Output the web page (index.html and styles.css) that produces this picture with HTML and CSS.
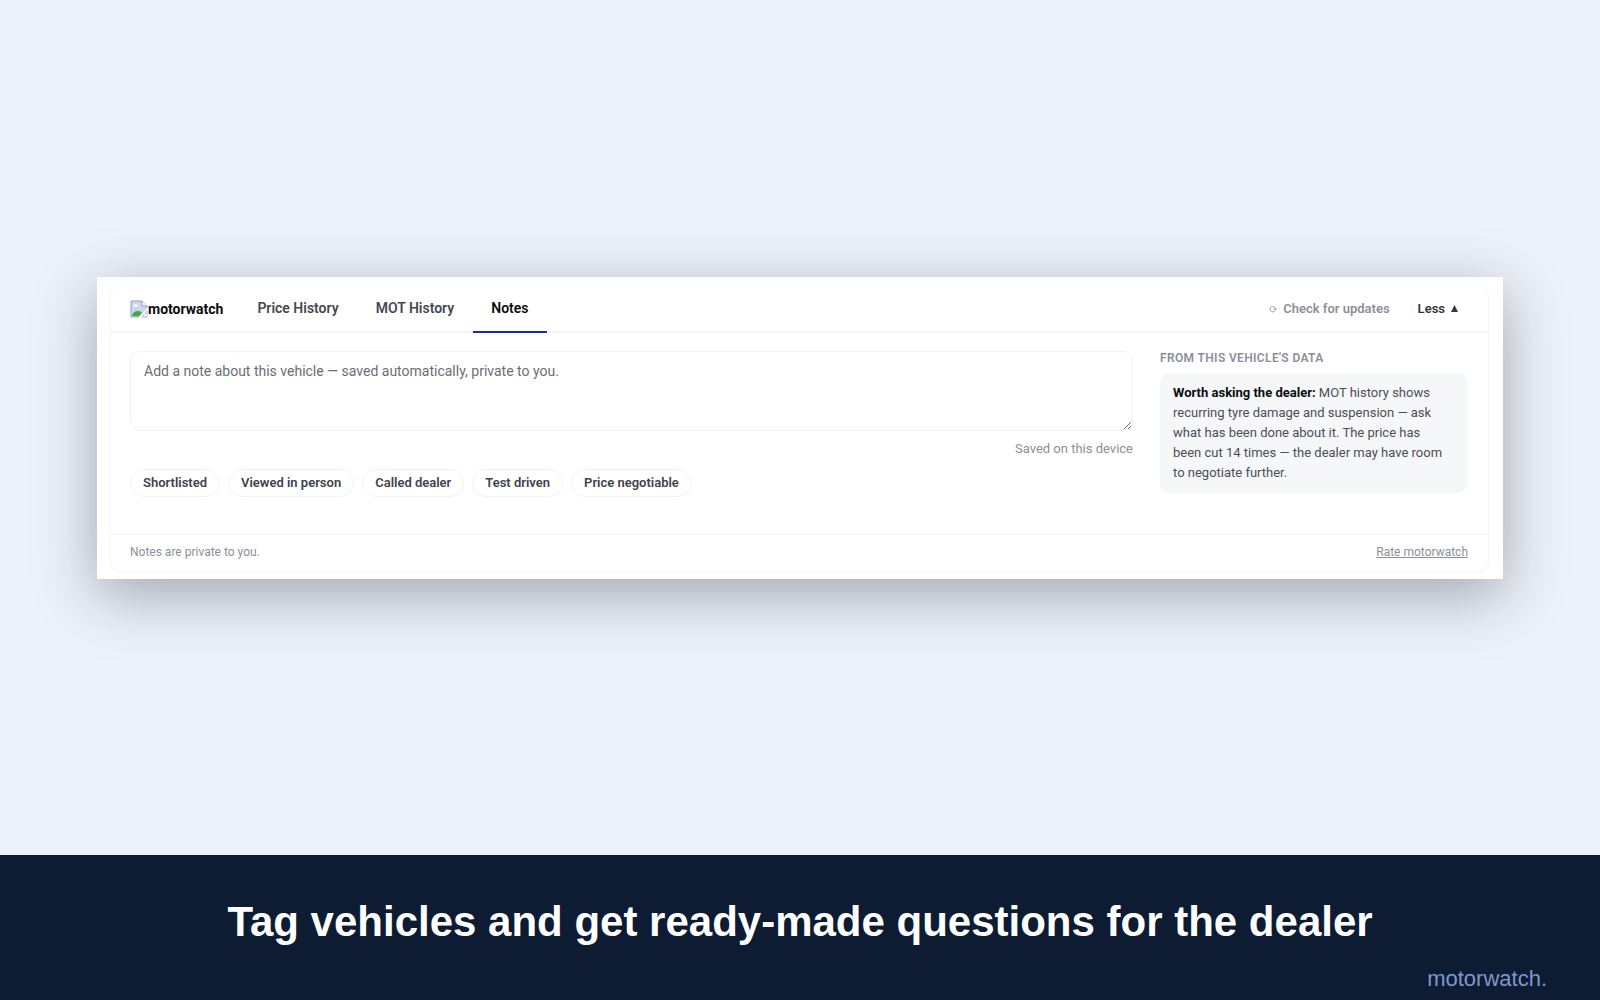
FILE: index.html
```html
<!DOCTYPE html>
<html lang="en">
<head>
    <meta charset="UTF-8">
    <meta name="viewport" content="width=device-width, initial-scale=1.0">
    <title>motorwatch</title>
    <link rel="stylesheet" href="styles.css">
</head>
<body>

<main class="stage">
    <div class="frame">
        <section class="widget">
            <header class="topbar">
                <div class="brand">
                    <svg class="brand-icon" viewBox="0 0 18 18" aria-hidden="true">
                        <path d="M1 1h11l5 5v3l-8 8H1z" fill="#c6d8f5"/>
                        <path d="M3 6.500q0-1.500 1.500-1.500q1-2 2.500 0q1.500 0 1.500 1.500z" fill="#fff"/>
                        <path d="M2 16q1-5 6-5q3 0 4 2l-3 3z" fill="#45a83c"/>
                        <path d="M1 17V1h11l5 5v2M1 17h8" fill="none" stroke="#9a9fa8"/>
                        <path d="M12 1v5h5" fill="#fff" stroke="#9a9fa8"/>
                        <path d="M17 11v6h-5z" fill="#fff" stroke="#b4b8be"/>
                    </svg>
                    <span>motorwatch</span>
                </div>
                <nav class="tabs">
                    <button type="button" class="tab">Price History</button>
                    <button type="button" class="tab">MOT History</button>
                    <button type="button" class="tab active">Notes</button>
                </nav>
                <div class="actions">
                    <button type="button" class="update">
                        <svg class="refresh" viewBox="0 0 9 9" aria-hidden="true">
                            <path d="M6.500 6.600A3 3 0 1 1 7 3.800" fill="none" stroke="#8b8f9b"/>
                            <path d="M5 3.800h4L7 6.200z" fill="#8b8f9b"/>
                        </svg>
                        Check for updates
                    </button>
                    <button type="button" class="toggle">
                        Less
                        <svg class="caret" viewBox="0 0 8 8" aria-hidden="true"><path d="M4 0l4 8H0z" fill="#33363f"/></svg>
                    </button>
                </div>
            </header>

            <div class="content">
                <div class="notes">
                    <textarea class="note" aria-label="Note" placeholder="Add a note about this vehicle — saved automatically, private to you."></textarea>
                    <p class="status">Saved on this device</p>
                    <div class="tags">
                        <button type="button" class="tag">Shortlisted</button>
                        <button type="button" class="tag">Viewed in person</button>
                        <button type="button" class="tag">Called dealer</button>
                        <button type="button" class="tag">Test driven</button>
                        <button type="button" class="tag">Price negotiable</button>
                    </div>
                </div>
                <aside class="insights">
                    <h2>From this vehicle's data</h2>
                    <p class="insight"><strong>Worth asking the dealer:</strong> MOT history shows recurring tyre damage and suspension — ask what has been done about it. The price has been cut 14 times — the dealer may have room to negotiate further.</p>
                </aside>
            </div>

            <footer class="bottombar">
                <span>Notes are private to you.</span>
                <a href="#">Rate motorwatch</a>
            </footer>
        </section>
    </div>
</main>

<div class="banner">
    <h1>Tag vehicles and get ready-made questions for the dealer</h1>
    <p>motorwatch.</p>
</div>

</body>
</html>
```
FILE: styles.css
```css
* {
    box-sizing: border-box;
}
body {
    margin: 0;
    min-height: 100vh;
    display: flex;
    flex-direction: column;
    background: #edf1fa;
    font-family: Roboto, "Liberation Sans", sans-serif;
}
h1, h2, p {
    margin: 0;
}
button {
    border: none;
    background: none;
    padding: 0;
    font-family: inherit;
    font-weight: 600;
    cursor: pointer;
}
.stage {
    flex: 1;
    display: flex;
    align-items: center;
    padding: 0 97px;
}
.frame {
    flex: 1;
    padding: 7px 14px 7px 13px;
    background: #fff;
    box-shadow: 0 16px 56px rgba(15, 23, 32, 0.34);
}
.widget {
    border: 1px solid #f6f7f8;
    border-top-color: #fff;
    border-radius: 12px;
    background: #fff;
    box-shadow: 0 1px 2px rgba(0, 0, 0, 0.03);
}
.topbar {
    display: flex;
    height: 48px;
    padding: 0 30px 0 19px;
    border-bottom: 2px solid #f5f6f7;
}
.brand {
    display: flex;
    align-items: center;
    margin-right: 16px;
    padding-top: 2px;
    font-size: 14px;
    font-weight: 700;
    color: #0b0c10;
}
.brand-icon {
    width: 18px;
    height: 18px;
}
.tabs {
    display: flex;
    gap: 1px;
    margin-bottom: -2px;
}
.tab {
    padding: 0 18px;
    border-bottom: 2px solid transparent;
    font-size: 14px;
    color: #454853;
}
.tab.active {
    color: #0b0c10;
    border-bottom-color: #1427c8;
}
.actions {
    display: flex;
    align-items: center;
    gap: 28px;
    margin-left: auto;
    padding-top: 2px;
}
.update, .toggle {
    display: flex;
    align-items: center;
    font-size: 13px;
}
.update {
    gap: 6px;
    color: #8b8f9b;
}
.toggle {
    gap: 6px;
    color: #33363f;
}
.refresh {
    width: 8px;
    height: 8px;
}
.caret {
    width: 7px;
    height: 7px;
}
.content {
    display: flex;
    gap: 27px;
    padding: 18px 20px 37px 19px;
}
.notes {
    flex: 1;
}
.note {
    display: block;
    width: 100%;
    height: 80px;
    padding: 9px 13px;
    border: 1px solid #f1f2f4;
    border-radius: 10px;
    font-family: inherit;
    font-size: 14px;
    line-height: 20px;
    resize: vertical;
}
.note::placeholder {
    color: #6b6e74;
}
.status {
    margin: 8px 0 10px;
    font-size: 13px;
    line-height: 20px;
    text-align: right;
    color: #8b8f9b;
}
.tags {
    display: flex;
    gap: 8px;
}
.tag {
    height: 28px;
    padding: 0 12px;
    border: 1px solid #f1f2f4;
    border-radius: 14px;
    font-size: 13px;
    color: #3f424c;
}
.insights {
    width: 308px;
}
.insights h2 {
    margin-bottom: 8px;
    font-size: 12px;
    font-weight: 600;
    line-height: 14px;
    letter-spacing: 0.03em;
    text-transform: uppercase;
    color: #8b8f9b;
}
.insight {
    padding: 10px 20px 10px 13px;
    border-radius: 10px;
    background: #f6f7f9;
    font-size: 13px;
    line-height: 20px;
    color: #4b4e58;
}
.insight strong {
    color: #0b0c10;
}
.bottombar {
    display: flex;
    justify-content: space-between;
    align-items: center;
    height: 37px;
    padding: 0 20px 2px 19px;
    border-top: 1px solid #f3f4f5;
    font-size: 12px;
    color: #8b8f9b;
}
.bottombar a {
    color: inherit;
}
.banner {
    min-height: 145px;
    padding: 42px 53px 8px;
    background: #0d1b33;
    font-family: "Liberation Sans", Arial, sans-serif;
}
.banner h1 {
    font-size: 42px;
    line-height: 50px;
    text-align: center;
    color: #fff;
}
.banner p {
    margin-top: 19px;
    font-size: 22px;
    line-height: 26px;
    text-align: right;
    color: #8196cb;
}
```
